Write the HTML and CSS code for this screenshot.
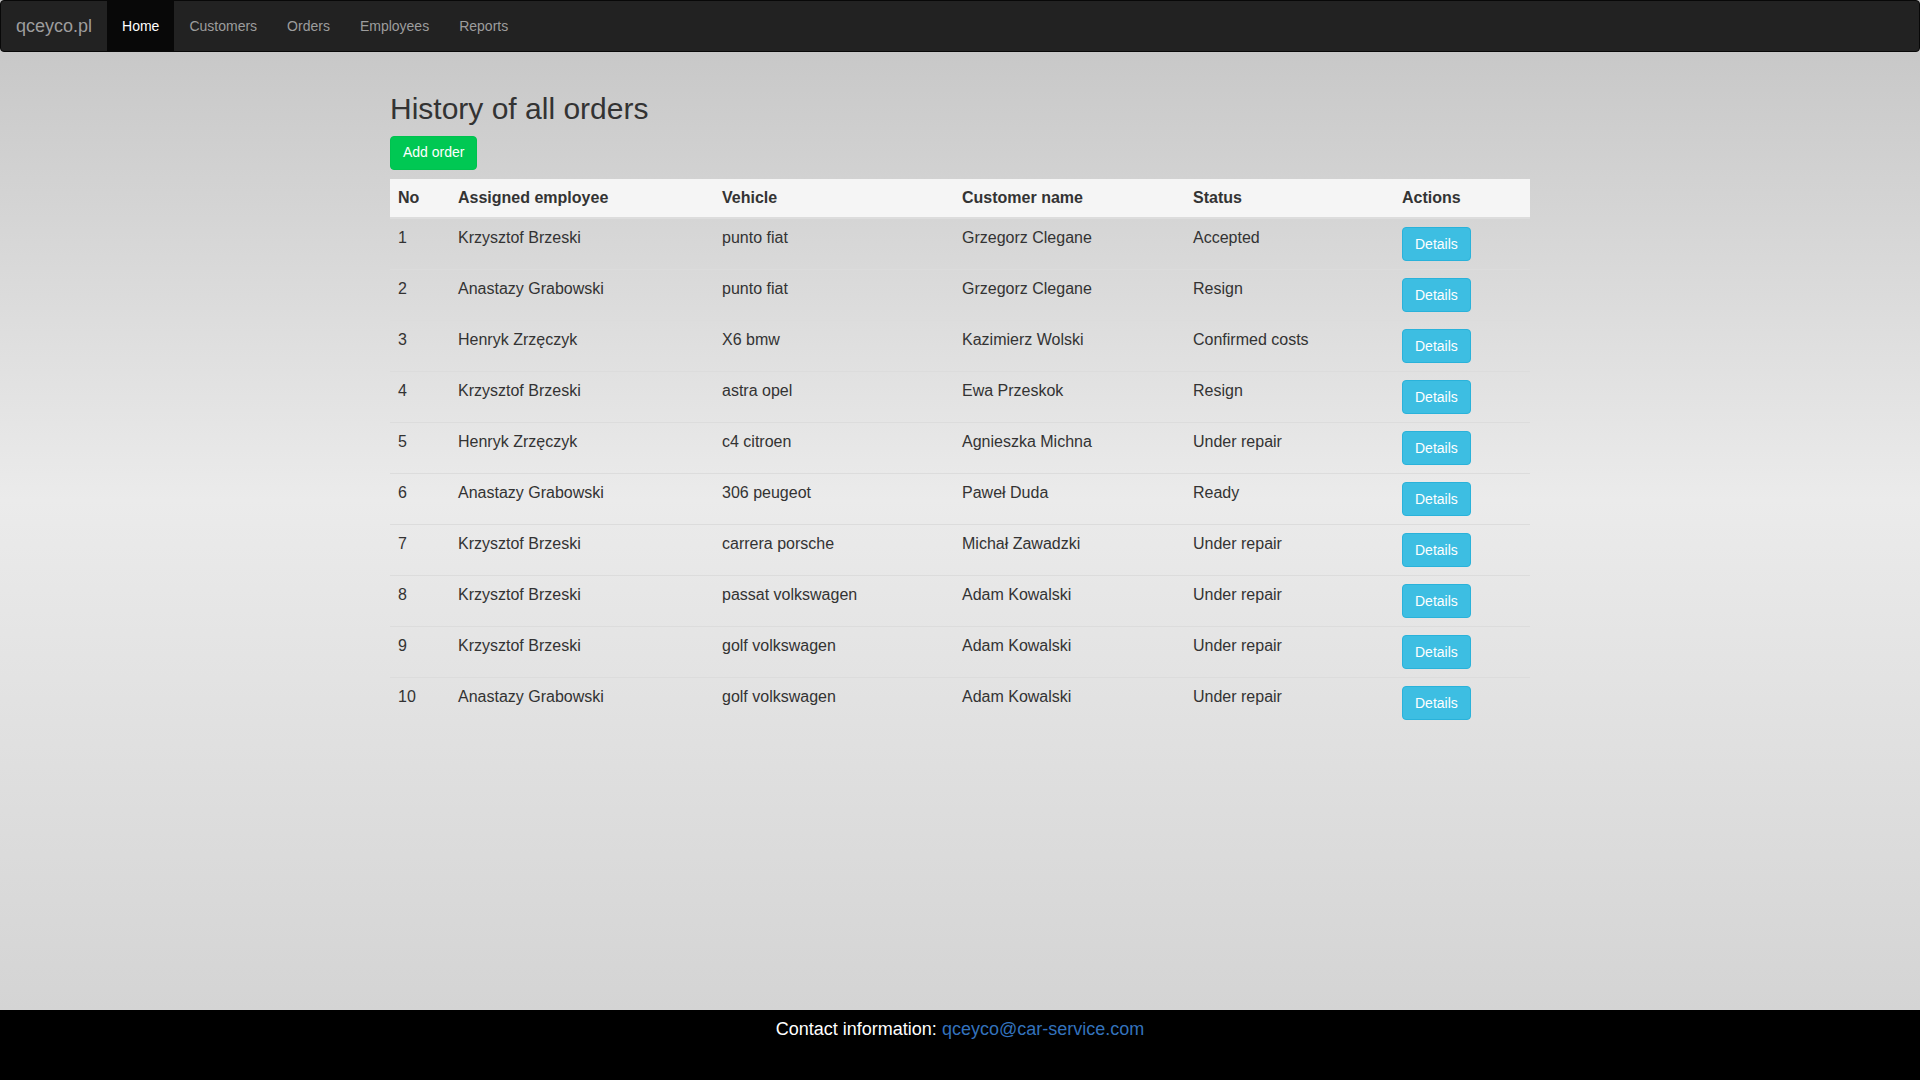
FILE: index.html
```html
<!DOCTYPE html>
<html lang="en">
<head>
<meta charset="utf-8">
<title>qceyco.pl - History of all orders</title>
<link rel="stylesheet" href="styles.css">
</head>
<body>
<div class="page">
  <nav class="navbar">
    <a class="brand" href="#">qceyco.pl</a>
    <ul class="nav">
      <li class="active"><a href="#">Home</a></li>
      <li><a href="#">Customers</a></li>
      <li><a href="#">Orders</a></li>
      <li><a href="#">Employees</a></li>
      <li><a href="#">Reports</a></li>
    </ul>
  </nav>
  <main class="container">
    <h2 class="title">History of all orders</h2>
    <a class="btn btn-success" href="#">Add order</a>
    <table class="table">
      <thead>
        <tr>
          <th class="c-no">No</th>
          <th class="c-emp">Assigned employee</th>
          <th class="c-veh">Vehicle</th>
          <th class="c-cust">Customer name</th>
          <th class="c-status">Status</th>
          <th class="c-act">Actions</th>
        </tr>
      </thead>
      <tbody>
        <tr><td>1</td><td>Krzysztof Brzeski</td><td>punto fiat</td><td>Grzegorz Clegane</td><td>Accepted</td><td><a class="btn btn-info" href="#">Details</a></td></tr>
        <tr><td>2</td><td>Anastazy Grabowski</td><td>punto fiat</td><td>Grzegorz Clegane</td><td>Resign</td><td><a class="btn btn-info" href="#">Details</a></td></tr>
        <tr><td>3</td><td>Henryk Zrzęczyk</td><td>X6 bmw</td><td>Kazimierz Wolski</td><td>Confirmed costs</td><td><a class="btn btn-info" href="#">Details</a></td></tr>
        <tr><td>4</td><td>Krzysztof Brzeski</td><td>astra opel</td><td>Ewa Przeskok</td><td>Resign</td><td><a class="btn btn-info" href="#">Details</a></td></tr>
        <tr><td>5</td><td>Henryk Zrzęczyk</td><td>c4 citroen</td><td>Agnieszka Michna</td><td>Under repair</td><td><a class="btn btn-info" href="#">Details</a></td></tr>
        <tr><td>6</td><td>Anastazy Grabowski</td><td>306 peugeot</td><td>Paweł Duda</td><td>Ready</td><td><a class="btn btn-info" href="#">Details</a></td></tr>
        <tr><td>7</td><td>Krzysztof Brzeski</td><td>carrera porsche</td><td>Michał Zawadzki</td><td>Under repair</td><td><a class="btn btn-info" href="#">Details</a></td></tr>
        <tr><td>8</td><td>Krzysztof Brzeski</td><td>passat volkswagen</td><td>Adam Kowalski</td><td>Under repair</td><td><a class="btn btn-info" href="#">Details</a></td></tr>
        <tr><td>9</td><td>Krzysztof Brzeski</td><td>golf volkswagen</td><td>Adam Kowalski</td><td>Under repair</td><td><a class="btn btn-info" href="#">Details</a></td></tr>
        <tr><td>10</td><td>Anastazy Grabowski</td><td>golf volkswagen</td><td>Adam Kowalski</td><td>Under repair</td><td><a class="btn btn-info" href="#">Details</a></td></tr>
      </tbody>
    </table>
  </main>
  <footer class="footer">
    Contact information: <a class="mail" href="#">qceyco@car-service.com</a>
  </footer>
</div>
</body>
</html>
```
FILE: styles.css
```css
* { box-sizing: border-box; }
html, body { margin: 0; padding: 0; }
body {
  font-family: "Liberation Sans", Arial, Helvetica, sans-serif;
  font-size: 14px;
  line-height: 1.42857;
  color: #333;
  background: linear-gradient(to bottom, #c4c4c4 0px, #ebebeb 500px, #d4d4d4 1010px);
}
a { text-decoration: none; }
.page {
  min-height: 100vh;
  display: flex;
  flex-direction: column;
}
.navbar {
  display: flex;
  height: 52px;
  background: #222;
  border: 1px solid #080808;
  border-radius: 4px;
  margin-bottom: 20px;
}
.brand {
  display: block;
  height: 50px;
  padding: 15px;
  font-size: 18px;
  line-height: 20px;
  color: #9d9d9d;
}
.nav {
  display: flex;
  list-style: none;
  margin: 0;
  padding: 0;
}
.nav a {
  display: block;
  padding: 15px;
  line-height: 20px;
  font-size: 14px;
  color: #9d9d9d;
}
.nav .active a {
  color: #fff;
  background: #080808;
}
.container {
  flex: 1;
  width: 1170px;
  margin: 0 auto;
  padding: 0 15px;
}
.title {
  margin: 20px 0 11px;
  font-size: 30px;
  font-weight: 500;
  line-height: 1.1;
  color: #333;
}
.btn {
  display: inline-block;
  padding: 6px 12px;
  font-size: 14px;
  line-height: 1.42857;
  border: 1px solid transparent;
  border-radius: 4px;
  color: #fff;
  vertical-align: middle;
}
.btn-success {
  background: #00c853;
  border-color: #00c24f;
}
.btn-info {
  background: #3dbee2;
  border-color: #2ab2da;
}
.table {
  width: 1140px;
  margin-top: 9px;
  margin-bottom: 20px;
  border-collapse: collapse;
  border-spacing: 0;
  font-size: 16px;
}
.table th, .table td {
  padding: 8px;
  text-align: left;
  vertical-align: top;
}
.table tbody td {
  border-top: 1px solid #dcdcdc;
  line-height: 1.4;
}
.table thead th {
  background: #f5f5f5;
  font-weight: bold;
  line-height: 22px;
  border-bottom: 2px solid #dcdcdc;
  vertical-align: bottom;
}
.table tbody tr:first-child td { border-top: 0; }
.table tbody td .btn {
  line-height: 20px;
  vertical-align: top;
}
.c-no { width: 60px; }
.c-emp { width: 264px; }
.c-veh { width: 240px; }
.c-cust { width: 231px; }
.c-status { width: 209px; }
.c-act { width: 136px; }
.footer {
  height: 70px;
  background: #000;
  color: #fff;
  text-align: center;
  font-size: 18px;
  line-height: 1.2;
  padding-top: 9px;
}
.mail { color: #3372bd; }
```
